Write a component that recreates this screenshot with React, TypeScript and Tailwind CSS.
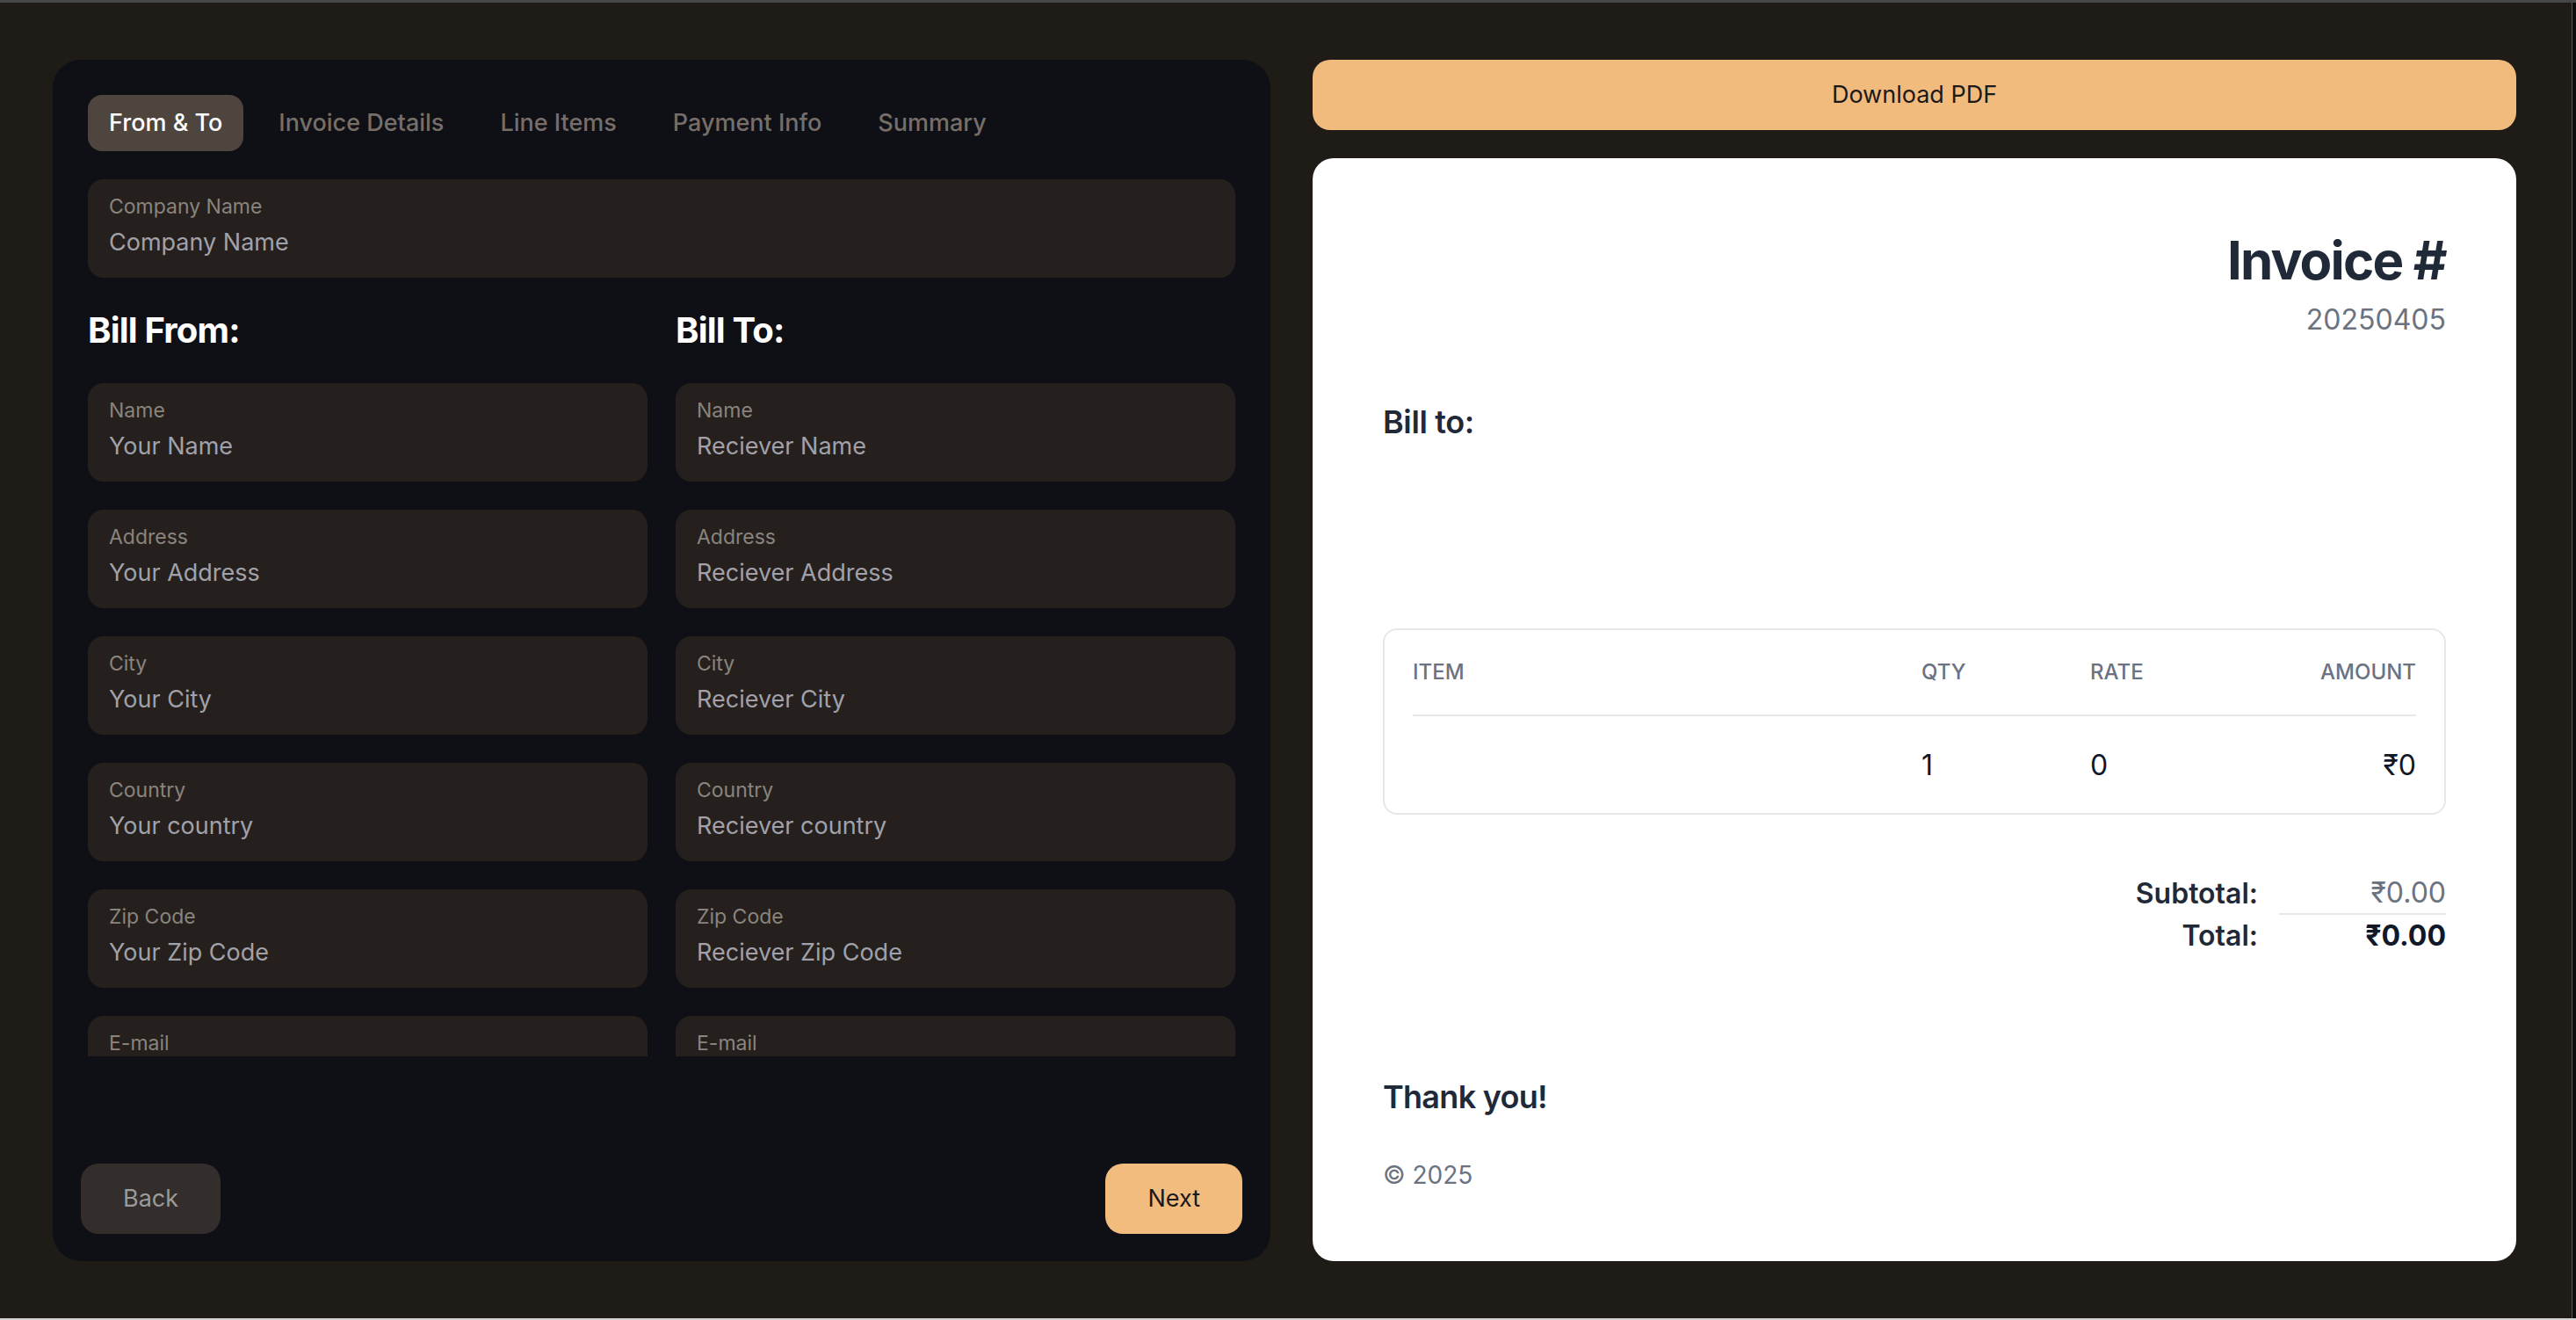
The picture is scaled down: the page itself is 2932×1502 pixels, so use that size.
import React from "react";

type Field = { label: string; placeholder: string };

const fromFields: Field[] = [
  { label: "Name", placeholder: "Your Name" },
  { label: "Address", placeholder: "Your Address" },
  { label: "City", placeholder: "Your City" },
  { label: "Country", placeholder: "Your country" },
  { label: "Zip Code", placeholder: "Your Zip Code" },
  { label: "E-mail", placeholder: "Your E-mail" },
];

const toFields: Field[] = [
  { label: "Name", placeholder: "Reciever Name" },
  { label: "Address", placeholder: "Reciever Address" },
  { label: "City", placeholder: "Reciever City" },
  { label: "Country", placeholder: "Reciever country" },
  { label: "Zip Code", placeholder: "Reciever Zip Code" },
  { label: "E-mail", placeholder: "Reciever E-mail" },
];

const tabs = ["From & To", "Invoice Details", "Line Items", "Payment Info", "Summary"];

function InputBox({ label, placeholder }: Field) {
  return (
    <div className="h-[112px] shrink-0 rounded-[18px] bg-[#25201d] px-[24px] pt-[15px]">
      <div className="text-[23px] leading-[32px] text-[#8a847e]">{label}</div>
      <input
        placeholder={placeholder}
        className="mt-[5px] block w-full bg-transparent text-[27px] leading-[40px] text-[#a1a1aa] placeholder:text-[#a1a1aa] outline-none"
      />
    </div>
  );
}

function Column({ title, fields }: { title: string; fields: Field[] }) {
  return (
    <div className="flex flex-col gap-[32px]">
      <h2 className="text-[40px] font-bold leading-[56px] tracking-[-0.02em] text-white">{title}</h2>
      {fields.map(f => (
        <InputBox key={f.label} {...f} />
      ))}
    </div>
  );
}

export default function App() {
  return (
    <div className="h-[1502px] w-full overflow-hidden border-b-2 border-[#d4d4d4] bg-[#1f1c18] font-['Inter',sans-serif]">
      <div className="h-[3px] bg-[#474747]" />
      <div className="flex h-[1497px] border-r-4 border-[#0c0c0c]">
        <div className="flex flex-1 gap-[48px] border-r border-[#555] pl-[60px] pr-[63px] pt-[65px]">
          {/* Form panel */}
          <div className="flex h-[1367px] w-[1386px] shrink-0 flex-col rounded-[32px] bg-[#0f1015] px-[40px] pt-[40px] pb-[31px]">
            <div className="flex gap-[16px]">
              {tabs.map((t, i) => (
                <button
                  key={t}
                  className={`h-[64px] rounded-[16px] px-[24px] text-[27px] font-medium leading-[40px] ${
                    i === 0 ? "bg-[#4e453e] text-white" : "text-[#766e68]"
                  }`}
                >
                  {t}
                </button>
              ))}
            </div>

            <div className="mt-[32px] flex h-[998px] flex-col gap-[32px] overflow-hidden">
              <InputBox label="Company Name" placeholder="Company Name" />
              <div className="grid grid-cols-2 gap-[32px]">
                <Column title="Bill From:" fields={fromFields} />
                <Column title="Bill To:" fields={toFields} />
              </div>
            </div>

            <div className="-mx-[8px] mt-auto flex justify-between">
              <button className="h-[80px] rounded-[20px] bg-[#332e2b] px-[48px] text-[27px] text-[#9b9b9b]">
                Back
              </button>
              <button className="h-[80px] rounded-[20px] bg-[#f3bc7f] px-[48px] text-[27px] text-[#1c1917]">
                Next
              </button>
            </div>
          </div>

          {/* Preview */}
          <div className="flex h-[1367px] w-[1370px] shrink-0 flex-col gap-[32px]">
            <button className="h-[80px] shrink-0 rounded-[20px] bg-[#f2bb7e] text-[27px] text-[#1c1917]">
              Download PDF
            </button>
            <div className="flex flex-1 flex-col rounded-[24px] bg-white p-[80px] pb-[78px]">
              <div className="text-right">
                <div className="text-[60px] font-bold leading-[72px] tracking-[-0.03em] text-[#1f2937]">Invoice #</div>
                <div className="mt-[8px] text-[32px] leading-[48px] text-[#6b7280]">20250405</div>
              </div>
              <div className="mt-[64px] text-[36px] font-semibold leading-[56px] tracking-[-0.01em] text-[#1f2937]">Bill to:</div>

              <div className="mt-[207px] rounded-[16px] border-2 border-[#e5e7eb] px-[32px] pb-[30px] pt-[32px]">
                <div className="grid grid-cols-[579px_192px_1fr_1fr] border-b-2 border-[#e5e7eb] pb-[32px] text-[24px] font-medium uppercase leading-[32px] text-[#6b7280]">
                  <div>Item</div>
                  <div>Qty</div>
                  <div>Rate</div>
                  <div className="text-right">Amount</div>
                </div>
                <div className="grid grid-cols-[579px_192px_1fr_1fr] pt-[32px] text-[32px] leading-[48px] text-[#111827]">
                  <div />
                  <div>1</div>
                  <div>0</div>
                  <div className="text-right">₹0</div>
                </div>
              </div>

              <div className="mt-[66px] grid grid-cols-[auto_190px] justify-end gap-x-[24px] text-[32px]">
                <div className="text-right font-semibold leading-[48px] text-[#1f2937]">Subtotal:</div>
                <div className="border-b-2 border-[#e5e7eb] text-right leading-[46px] text-[#6b7280]">₹0.00</div>
                <div className="text-right font-semibold leading-[48px] text-[#1f2937]">Total:</div>
                <div className="text-right font-bold leading-[48px] text-[#111827]">₹0.00</div>
              </div>

              <div className="mt-auto">
                <div className="text-[36px] font-semibold leading-[56px] tracking-[-0.02em] text-[#1f2937]">Thank you!</div>
                <div className="mt-[41px] text-[28px] leading-[40px] text-[#6b7280]">© 2025</div>
              </div>
            </div>
          </div>
        </div>
      </div>
    </div>
  );
}
